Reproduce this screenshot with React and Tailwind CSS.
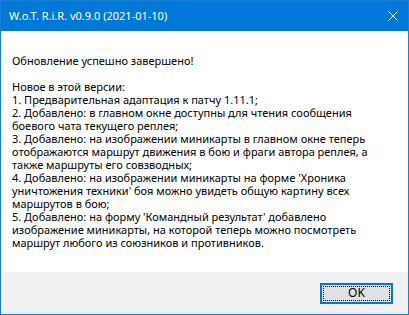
export default function App() {
  const text = [
    "Обновление успешно завершено!",
    "",
    "Новое в этой версии:",
    "1. Предварительная адаптация к патчу 1.11.1;",
    "2. Добавлено: в главном окне доступны для чтения сообщения",
    "боевого чата текущего реплея;",
    "3. Добавлено: на изображении миникарты в главном окне теперь",
    "отображаются маршрут движения в бою и фраги автора реплея, а",
    "также маршруты его совзводных;",
    "4. Добавлено: на изображении миникарты на форме 'Хроника",
    "уничтожения техники' боя можно увидеть общую картину всех",
    "маршрутов в бою;",
    "5. Добавлено: на форму 'Командный результат' добавлено",
    "изображение миникарты, на которой теперь можно посмотреть",
    "маршрут любого из союзников и противников.",
  ].join("\n");
  return (
    <div className="w-[409px] h-[315px] flex flex-col bg-white border border-[#1a7fd4] text-[11px] font-['Noto_Sans',sans-serif]">
      <div className="h-[30px] shrink-0 bg-[#0078d7] flex items-center justify-between pl-2 pr-[10px] text-white">
        <span className="pt-px">W.o.T. R.i.R. v0.9.0 (2021-01-10)</span>
        <svg width="10" height="10" viewBox="0 0 10 10">
          <path d="M0.5 0.5 L9.5 9.5 M9.5 0.5 L0.5 9.5" stroke="white" strokeWidth="1" />
        </svg>
      </div>
      <div className="flex-1 pt-[23px] pl-[11px] text-black leading-[13px] whitespace-pre">
        {text}
      </div>
      <div className="h-[42px] shrink-0 bg-[#f0f0f0] flex items-center justify-end pr-[15px]">
        <div className="w-[73px] h-[21px] border-2 border-[#0078d7] bg-[#e1e1e1] p-px">
          <div className="w-full h-full border border-dotted border-black flex items-center justify-center text-black text-[12px] leading-none">
            OK
          </div>
        </div>
      </div>
    </div>
  );
}
